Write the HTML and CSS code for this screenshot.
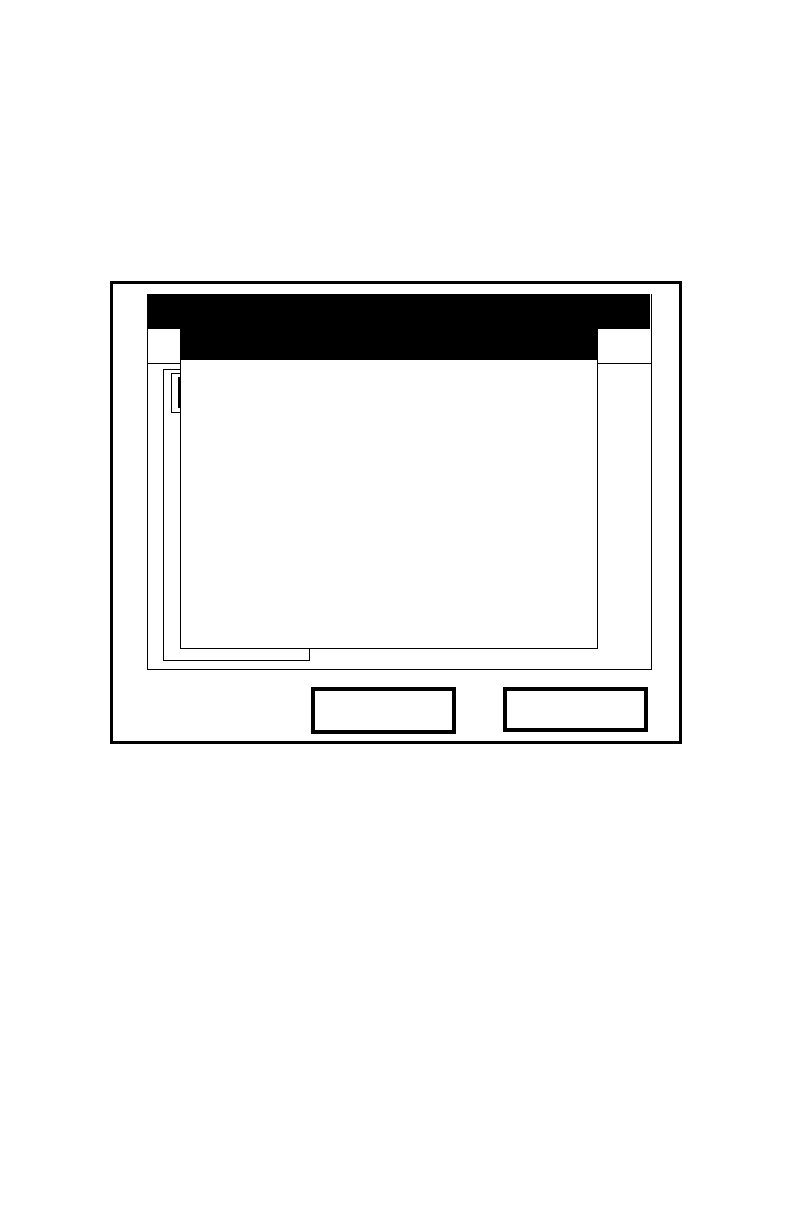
FILE: index.html
```html
<!DOCTYPE html>
<html>
<head>
<meta charset="utf-8">
<link rel="stylesheet" href="styles.css">
</head>
<body>
<div class="frame">
  <div class="panel">
    <div class="title-bar"></div>
    <div class="tab-row"></div>
    <div class="panel-body">
      <div class="list-box">
        <div class="field">
          <div class="cursor"></div>
        </div>
      </div>
    </div>
    <div class="dialog">
      <div class="dialog-header"></div>
    </div>
  </div>
  <div class="buttons">
    <div class="btn btn-left"></div>
    <div class="btn btn-right"></div>
  </div>
</div>
</body>
</html>
```

FILE: styles.css
```css
html, body {
  margin: 0;
  padding: 0;
  background: #fff;
  font-family: "Liberation Sans", Arial, sans-serif;
}

.frame {
  box-sizing: border-box;
  margin-left: 110px;
  margin-top: 281px;
  width: 572px;
  height: 463px;
  border: 3px solid #000;
  padding-top: 10px;
  padding-left: 34px;
}

.panel {
  position: relative;
  box-sizing: border-box;
  width: 505px;
  height: 376px;
  border: 1px solid #000;
  border-top: 0;
  display: flex;
  flex-direction: column;
}

.title-bar {
  height: 35px;
  margin-left: -1px;
  margin-right: 1px;
  background: #000;
}

.tab-row {
  height: 34px;
  border-bottom: 1px solid #000;
}

.panel-body {
  flex: 1;
  padding-top: 5px;
  padding-left: 15px;
}

.list-box {
  box-sizing: border-box;
  width: 147px;
  height: 292px;
  border: 1px solid #000;
  padding-top: 3px;
  padding-left: 7px;
}

.field {
  box-sizing: border-box;
  width: 24px;
  height: 40px;
  border: 1px solid #000;
  padding-top: 3px;
  padding-left: 6px;
}

.cursor {
  width: 3px;
  height: 31px;
  background: #000;
}

.dialog {
  position: absolute;
  left: 32px;
  top: 35px;
  box-sizing: border-box;
  width: 418px;
  height: 320px;
  border: 1px solid #000;
  background: #fff;
}

.dialog-header {
  height: 30px;
  background: #000;
}

.buttons {
  display: flex;
  align-items: flex-start;
  margin-top: 17px;
  margin-left: 164px;
  gap: 47px;
}

.btn {
  box-sizing: border-box;
  width: 145px;
  background: #fff;
}

.btn-left {
  height: 47px;
  border: 4px solid #000;
}

.btn-right {
  height: 45px;
  border: 4px solid #000;
}
```
